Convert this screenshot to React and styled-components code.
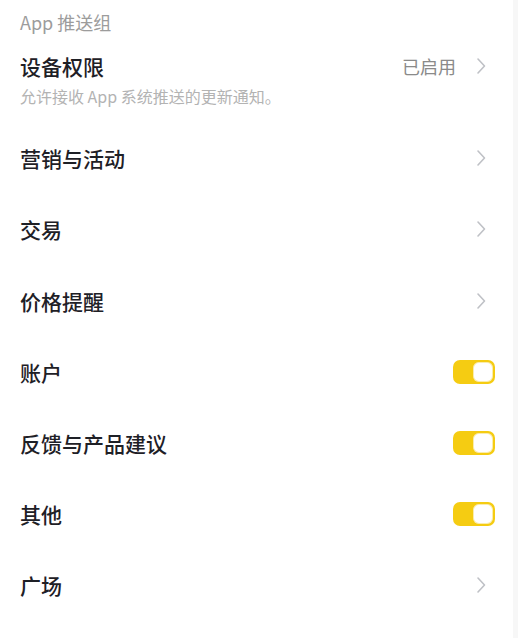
import React, { useState } from "react";
import styled, { createGlobalStyle } from "styled-components";

const GlobalStyle = createGlobalStyle`
  html, body {
    margin: 0;
    padding: 0;
    background-color: #f7f7f7;
  }
  body {
    font-family: "Noto Sans CJK SC", "Noto Sans", sans-serif;
    -webkit-font-smoothing: antialiased;
  }
`;

const Page = styled.main`
  background-color: #ffffff;
  margin-right: 5px;
  min-height: 100vh;
  padding: 0 18px 0 20px;
  box-sizing: border-box;
`;

const GroupTitle = styled.h2`
  margin: 0;
  height: 43px;
  display: flex;
  align-items: center;
  font-size: 18px;
  font-weight: 400;
  color: #9c9c9c;
`;

const PermissionBlock = styled.section`
  padding: 9px 0 16.6px;
`;

const PermissionHead = styled.div`
  display: flex;
  align-items: center;
  justify-content: space-between;
  height: 28px;
`;

const Label = styled.span`
  font-size: 21px;
  font-weight: 500;
  color: #1e2026;
  line-height: 28px;
`;

const Hint = styled.p`
  margin: 6px 0 0;
  font-size: 16px;
  line-height: 20px;
  color: #b3b3b3;
`;

const Trailing = styled.div`
  display: flex;
  align-items: center;
  gap: 13px;
`;

const Status = styled.span`
  font-size: 18px;
  color: #8a8a8a;
`;

const ChevronBox = styled.span`
  width: 24px;
  display: flex;
  justify-content: center;
  margin-right: 2px;
`;

const Row = styled.div`
  height: 71.2px;
  display: flex;
  align-items: center;
  justify-content: space-between;
`;

const Switch = styled.button`
  width: 42px;
  height: 24px;
  padding: 2px;
  border: none;
  border-radius: 7px;
  background-color: ${(p) => (p.$on ? "#f5cc12" : "#d8dbe0")};
  display: flex;
  justify-content: ${(p) => (p.$on ? "flex-end" : "flex-start")};
  cursor: pointer;
  box-sizing: border-box;
`;

const Knob = styled.span`
  width: 20px;
  height: 20px;
  border-radius: 6px;
  background-color: #ffffff;
  box-shadow: 0 0 0 1px rgba(240, 200, 20, 0.35) inset;
`;

function Chevron() {
  return (
    <ChevronBox>
      <svg width="10" height="18" viewBox="0 0 10 18" fill="none">
        <path d="M2 2l6.5 7-6.5 7" stroke="#bfc1c6" strokeWidth="1.6" strokeLinecap="round" strokeLinejoin="round" />
      </svg>
    </ChevronBox>
  );
}

const rows = [
  { label: "营销与活动", type: "link" },
  { label: "交易", type: "link" },
  { label: "价格提醒", type: "link" },
  { label: "账户", type: "switch" },
  { label: "反馈与产品建议", type: "switch" },
  { label: "其他", type: "switch" },
  { label: "广场", type: "link" },
];

export default function App() {
  const [toggles, setToggles] = useState({ 账户: true, 反馈与产品建议: true, 其他: true });

  return (
    <Page>
      <GlobalStyle />
      <GroupTitle>App 推送组</GroupTitle>
      <PermissionBlock>
        <PermissionHead>
          <Label>设备权限</Label>
          <Trailing>
            <Status>已启用</Status>
            <Chevron />
          </Trailing>
        </PermissionHead>
        <Hint>允许接收 App 系统推送的更新通知。</Hint>
      </PermissionBlock>
      {rows.map((row) => (
        <Row key={row.label}>
          <Label>{row.label}</Label>
          {row.type === "link" ? (
            <Chevron />
          ) : (
            <Switch
              $on={toggles[row.label]}
              aria-label={row.label}
              onClick={() => setToggles((t) => ({ ...t, [row.label]: !t[row.label] }))}
            >
              <Knob />
            </Switch>
          )}
        </Row>
      ))}
    </Page>
  );
}
